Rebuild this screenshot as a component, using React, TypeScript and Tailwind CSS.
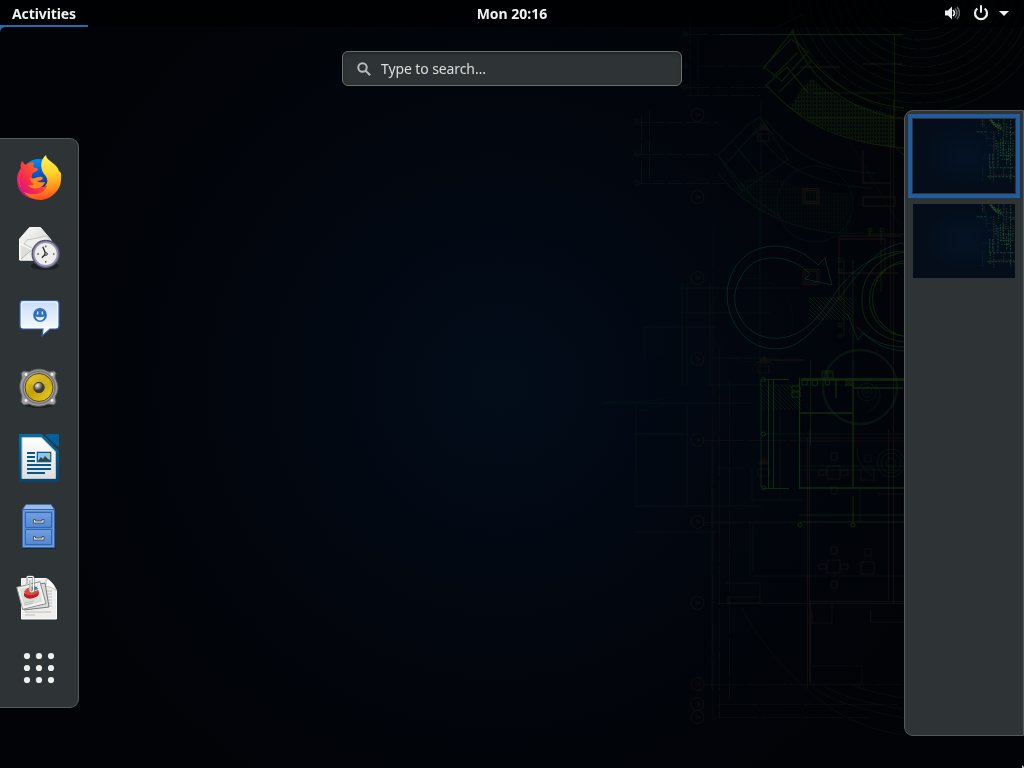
import type { ReactNode } from "react";

function Marker({ x, y, r = 6.5 }: { x: number; y: number; r?: number }) {
  return (
    <g>
      <circle cx={x} cy={y} r={r} />
      <path d={`M${x - 2} ${y - 1}h4v2h-3`} />
    </g>
  );
}

function Drawing() {
  const rows = [115, 197, 278, 359, 440, 522, 603, 684, 704, 717];
  const rings = Array.from({ length: 11 }, (_, i) => i);
  return (
    <g fill="none" strokeWidth="1">
      <g stroke="#2f211c" opacity="0.38">
        {rows.map((y) => (
          <Marker key={y} x={697.5} y={y} />
        ))}
        <path d="M704 440.5h94M704 522.5h94M704 684.5h198M718 704.5h180M718 717.5h150M713 230v490M719.5 350v368M729.5 380v320" strokeDasharray="40 3" opacity="0.6" />
        <path d="M809.5 430v252M807.5 438v250M810.5 600v85M890.5 110v220M893.5 100v505M888.5 430v170" />
        <path d="M800 438h104M800 441h104M718 603.5h186M728 597h32v6h-32zM725 583h35v14M812 601.5h92M870.5 610v12h34M812 612v11h20v-22" />
        <path d="M803 188.500h16v15h-16zM805 190.500h12v11h-12zM803 269.500h16v15h-16zM805 271.500h12v11h-12zM840 236h62M840 239h45v34M840 273h58M839 236v60M863 197h32v9h-32zM863 150v33h28M800 67h40M863 64h40M760 360h44" strokeWidth="1.3" />
        <path d="M742 608c20 40 61 82 86 98 20 14 44 24 75 29M811 687c28 18 60 24 92 31M825 687c27 14 55 18 78 22M850 684c20 8 35 11 53 14M812 666h50v18h-50" opacity=".7" />
        <path d="M759 130l5-7 5 7zM754 135l5-5M774 135l-5-5M759 363l5-7 5 7zM754 366l5-5M774 366l-5-5M759 464l5-6 5 6z" fill="#2b1b15" />
        <path d="M758 134h11v7h-11zM758 366h11v7h-11zM758 469h11v7h-11z" />
        {[472, 566].map((y) => (
          <path key={y} d={`M827 ${y - 6}h13v13h-13zM831 ${y - 19}h6v7h-6zM819 ${y - 2}h7v5h-7zM841 ${y - 2}h7v5h-7zM831 ${y + 15}h6v7h-6zM861 ${y - 4}h13v12h-13zM865 ${y - 17}h6v7h-6z`} />
        ))}
      </g>
      <g stroke="#11331f" opacity="0.25">
        <path d="M641.5 115v70M649.5 110v74M640 122.500h78M640 154.500h78M640 183.500h84M690 20v75M698 38v57M684 34.500h220M700 66h68M685 87.500h85M685 95.500h75" strokeDasharray="25 3 14 3" />
        <Marker x={685} y={34} r={2.5} /><Marker x={685} y={66} r={2.5} /><Marker x={685} y={87} r={2.5} /><Marker x={637} y={122} r={2.5} /><Marker x={637} y={154} r={2.5} /><Marker x={637} y={183} r={2.5} />
        <path d="M710 283v102h193M679 288h120M682 283v102M687 283v102M645 327h70M645 327v32M680 313h90M760 210v180M711 358h68M761 98v150" />
        <path d="M602 403h150M636 405v101h126M687 405v101M636 434h52M712 440v250M718 468h25M718 522h185M636 532h80" />
        <path d="M602 403c12-4 35 0 55-3l12-3M638 411c18-3 28-10 45-8" opacity=".6" />
        <path d="M752 468v32h48M752 500h51M750 522v54h154M753 523v50M804 520v56M780 390v110" />
        <circle cx="751" cy="320" r="42" opacity=".6" />
        <circle cx="815" cy="204" r="38" />
        <path d="M610 110c25 28 59 57 100 70M610 130c26 30 60 46 100 50" opacity=".5" />
        <path d="M718 173c27 36 80 64 146 60M718 155l35 43 29 20M718 155l30-30 12-8 28 42-28 20-18 12zM724 166l38-42M735 145l23 28M753 125c22 41 60 60 119 63M765 119c26 35 60 52 110 54" strokeWidth="1.3" />
      </g>
      <g stroke="#22430b" opacity="0.38">
        <path d="M763 69l30-39c7 35 38 64 65 76 15 7 30 11 46 13M766 85c39 43 80 58 138 63M764 67l27-28 17 13-26 29zM765 86l22-19 21 26M777 27l25-12M792 32c23 43 62 71 112 76M773 77l24-24M779 92l32-31M894.5 35v112" strokeWidth="1.3" />
        <g opacity=".65">
          {rings.map((i) => (
            <circle key={i} cx="920" cy="-20" r={42 + i * 9} strokeDasharray={i % 2 ? "9 1" : "100 2"} />
          ))}
        </g>
        <path d="M720 34.5h183M895 147l9 8M808 118h95M813 93h82" />
        <path d="M850 143l52 85" opacity=".4" />
      </g>
      <path d="M790 108L802 88 812 78C833 99 865 108 894 115V147C859 145 822 130 790 108Z" fill="url(#hatch)" stroke="none" opacity=".48" />
      <path d="M733 188L762 170C790 187 820 194 850 193V233C806 236 762 219 733 188Z" fill="url(#hatch)" stroke="none" opacity=".16" />
      <path d="M720 208h40v31h-40zM646 328h37v27h-37z" fill="url(#slant)" stroke="none" opacity=".07" />
      <path d="M809 297h43v23h-43z" fill="url(#slant)" stroke="none" opacity=".4" />
      <path d="M761 385h40v25h-40z" fill="url(#slant)" stroke="none" opacity=".25" />
      <g stroke="#115b38" opacity="0.38">
        <path d="M818 265C792 239 756 241 738 263C715 293 731 337 762 347C801 357 817 325 844 292C860 271 879 245 904 243M810 274C789 252 753 252 741 277C724 304 744 335 770 338C803 341 820 315 836 292C854 267 878 252 904 251M818 265l7-7 7 27-27-6 5-5M847 313l11 27 5-7c12 11 24 17 41 18M857 327c11 12 27 20 47 20" />
      </g>
      <g stroke="#245f0f" opacity="0.42">
        <path d="M911 260a38 38 0 1 0 0 77M906 263a33 33 0 1 0 0 73M913 252a48 48 0 0 0-51 51c0 19 14 35 42 39" strokeWidth="1.1" opacity=".8" />
        <path d="M763 379.500h26M768.500 380v108M773.500 380v108M763 488.500h26M761 380v107" />
        <circle cx="763.500" cy="379.500" r="2" /><circle cx="763.500" cy="434" r="2" /><circle cx="763.500" cy="488" r="2" />
        <path d="M799.500 378v110H904M801 379h103M801 380h103M853 378v110M800 413h53M800 488h104M836 378v20M853 388h50" strokeWidth="1.3" />
        <path d="M810.500 360v85M853 260v128M800 522h104M799 515h105" opacity=".65" />
        <path d="M822 371h5v7h-5zM828 371h5v7h-5zM823 373h3M829 373h3M792 386h8v5h-8zM792 392h8v5h-8zM802 379h5v6h-5zM846 379h6v6h-6zM845 379l8 7M853 379l-8 7M825 380h5l-1 5h-3z" />
        <circle cx="815" cy="383" r="3" /><circle cx="800" cy="525" r="2" /><circle cx="853" cy="525" r="2" /><path d="M853 496v27" />
        <path d="M867 234h37M870 229v8M881 229v16M844 260v76M881 250v42" opacity=".6" />
        <g opacity=".6">
          <circle cx="840" cy="260" r="2" /><circle cx="840" cy="271" r="2" /><circle cx="840" cy="298" r="2" /><circle cx="840" cy="325" r="2" /><circle cx="840" cy="336" r="2" /><circle cx="870" cy="230" r="2" /><circle cx="882" cy="230" r="2" />
        </g>
      </g>
      <g stroke="#194023" opacity=".27">
        <circle cx="860" cy="387" r="37" strokeWidth="2.500" />
        <circle cx="867" cy="392" r="5" /><circle cx="867" cy="392" r="9" /><circle cx="867" cy="392" r="2" />
        <circle cx="891" cy="463" r="5" /><circle cx="891" cy="463" r="10" /><circle cx="891" cy="463" r="14" />
        <path d="M875 385c12 11 0 23-8 28M857 448c0 15 7 21 15 28M860 487v34M878 494h26v30M800 466h104M801 470h100M763 434h140" />
      </g>
    </g>
  );
}

function ThumbDrawing() {
  return (
    <g fill="none" stroke="#2c6a3a" strokeWidth="9" opacity=".6">
      <path d="M773 33l55 50 70 46M802 75l88 20M790 50l60 55" stroke="#3e7a3a" strokeWidth="26" strokeDasharray="13 9" opacity=".75" />
      <path d="M696 30v80M912 27v180M980 35v620M905 210v175M876 390h148M770 375v128M800 378v122M853 260v250M765 515h259M748 605h276M640 155h100M940 350v150M960 165h60" strokeDasharray="24 12" />
      <path d="M780 35l58 75 60 29M785 35c35 70 60 85 110 80M860 35v160M940 70v160M880 230v170M910 235v180M890 430h85M1005 240v135M775 510v115M960 290v160M835 240v90M985 180h35M870 270h110M900 330h90" stroke="#43842c" strokeDasharray="12 14" />
      <path d="M714 50v60M810 148v520M910 520v70M805 590h210M935 110h80M925 250h60" stroke="#7a5640" opacity=".6" strokeDasharray="15 10" />
      <path d="M640 145l100 50M728 220h110M755 290h160M700 420h140M760 160h90M740 110v160M820 180v180M700 500v160" stroke="#1b4a50" strokeDasharray="8 15" />
    </g>
  );
}

function Wallpaper() {
  return (
    <svg viewBox="0 0 1024 768" className="absolute inset-0 h-full w-full" aria-hidden="true">
      <defs>
        <radialGradient id="night" gradientUnits="userSpaceOnUse" cx="500" cy="385" r="500">
          <stop offset="0" stopColor="#020d19" />
          <stop offset=".27" stopColor="#020914" />
          <stop offset=".6" stopColor="#02050c" />
          <stop offset="1" stopColor="#010306" />
        </radialGradient>
        <pattern id="hatch" width="3" height="4" patternUnits="userSpaceOnUse">
          <path d="M0 4L3 0M.5 0v4M0 1h3" stroke="#1b3510" strokeWidth=".65" />
        </pattern>
        <pattern id="slant" width="4" height="4" patternUnits="userSpaceOnUse">
          <path d="M-1 3l4 4M0 0l4 4M3-1l2 2" stroke="#1b5014" strokeWidth=".8" />
        </pattern>
      </defs>
      <path d="M0 0h1024v768H0z" fill="url(#night)" />
      <Drawing />
    </svg>
  );
}

function WorkspacePreview() {
  return (
    <svg viewBox="0 27 1024 741" preserveAspectRatio="none" className="block h-[74px] w-[102px]">
      <path d="M0 0h1024v768H0z" fill="#040d19" />
      <ellipse cx="520" cy="390" rx="460" ry="360" fill="url(#previewGlow)" />
      <defs>
        <radialGradient id="previewGlow"><stop stopColor="#041325" /><stop offset="1" stopColor="#040d19" /></radialGradient>
      </defs>
      <ThumbDrawing />
    </svg>
  );
}

function Icon({ children }: { children: ReactNode }) {
  return <svg viewBox="0 0 48 48" className="block h-12 w-12 overflow-visible">{children}</svg>;
}

function Firefox() {
  return (
    <Icon>
      <defs>
        <linearGradient id="foxRed" x1="5" y1="38" x2="38" y2="10" gradientUnits="userSpaceOnUse">
          <stop stopColor="#d51480" /><stop offset=".25" stopColor="#f52754" /><stop offset=".6" stopColor="#ff5b20" /><stop offset="1" stopColor="#ffad12" />
        </linearGradient>
        <linearGradient id="foxYellow" x1="30" y1="2" x2="36" y2="45" gradientUnits="userSpaceOnUse">
          <stop stopColor="#fff65b" /><stop offset=".45" stopColor="#ffd127" /><stop offset=".75" stopColor="#ff951e" /><stop offset="1" stopColor="#fd4c21" />
        </linearGradient>
        <linearGradient id="foxBlue" x1="21" y1="6" x2="26" y2="36" gradientUnits="userSpaceOnUse">
          <stop stopColor="#0090ee" /><stop offset=".45" stopColor="#075bd5" /><stop offset="1" stopColor="#29267d" />
        </linearGradient>
      </defs>
      <circle cx="24" cy="24" r="18" fill="url(#foxBlue)" />
      <path d="M7 8c1 2 2 3 4 4 2-2 5-3 8-2l-1 4c2 1 4 1 5 2 0 2-3 3-5 4-2 2-1 4-1 6 3 8 14 11 21 4l5-9c1 14-8 24-18 25C11 47 2 39 2 27c0-6 2-9 4-12-1-2 0-5 1-7z" fill="url(#foxRed)" />
      <path d="M31 2c0 6 11 8 13 16l2 2c1 11-2 16-5 19-5 6-11 8-16 8-6 0-12-3-16-8 12 5 20 1 23-6l-3 1c5-4 4-9 0-13-4-6-4-14 2-19z" fill="url(#foxYellow)" />
      <path d="M15 25c4 2 8-2 12-1 2 1 0 4-5 4 3 2 7 1 8 1-2 7-13 9-17 3 3 1 5 0 6-1-2-1-4-3-4-6z" fill="#ff8b1e" />
      <path d="M8 9c-1 2 0 4 2 6l4-2M7 17c-4 5-4 12-1 17" fill="none" stroke="#ff3660" strokeWidth="1" />
    </Icon>
  );
}

function Mail() {
  return (
    <Icon>
      <defs><linearGradient id="mailWhite" x2="1" y2="1"><stop stopColor="#fff" /><stop offset="1" stopColor="#c3c4bd" /></linearGradient></defs>
      <ellipse cx="30" cy="43" rx="14" ry="4" fill="#161a1b" opacity=".7" />
      <path d="M4.500 37V16L14.500 4.500h11L36 17v20z" fill="url(#mailWhite)" stroke="#f4f4f1" strokeWidth="1" />
      <path d="M9 21l3-4 20-4 4 7-17 6z" fill="#eeeeec" stroke="#c6c6c2" />
      <path d="M5 21l13 6L35 19v18H5z" fill="#dededb" stroke="#fff" />
      <path d="M6 36l12-10 11 10" fill="#eeeeeb" stroke="#b6b7b2" />
      <circle cx="30.700" cy="31" r="13.200" fill="#eeeeec" stroke="#565371" strokeWidth="2" />
      <circle cx="30.700" cy="31" r="11.900" fill="none" stroke="#9693b0" strokeWidth="1.800" />
      <path d="M30.700 22.500v1.700M30.700 38v1.500M22.200 31h1.700M38 31h1.500" stroke="#555" strokeWidth="1.400" />
      <path d="M27.800 23.800l2.900 7-3.800 4" fill="none" stroke="#242424" strokeWidth="1.300" />
      <circle cx="31" cy="31" r="1.300" fill="#fff" stroke="#222" strokeWidth="1" />
    </Icon>
  );
}

function Chat() {
  return (
    <Icon>
      <defs><linearGradient id="bubble" x2="0" y2="1"><stop stopColor="#c9dcf5" /><stop offset=".65" stopColor="#ecf5ff" /><stop offset="1" stopColor="#fff" /></linearGradient></defs>
      <path d="M8 7.500h33q3 0 3 3V33q0 3-3 3h-6l-8 7 1-7H8q-3 0-3-3V10.500q0-3 3-3z" fill="url(#bubble)" stroke="#2c60a5" strokeWidth="1.200" />
      <path d="M8 9h33l1.500 1.500V33L41 34.500H6.500v-24L8 9" fill="none" stroke="#fff" strokeWidth="1.200" opacity=".65" />
      <circle cx="25" cy="22" r="6.900" fill="#3471bd" /><path d="M22.700 18.500v3M27.300 18.500v3" stroke="#e6f2ff" strokeWidth="1.300" />
      <path d="M20.500 23.500q4.500 1.500 9 0-1.500 4-4.500 4t-4.500-4z" fill="#e6f2ff" />
    </Icon>
  );
}

function Speaker() {
  return (
    <Icon>
      <defs><linearGradient id="gold" x1="0" y1="0" x2="1" y2="1"><stop stopColor="#e6ca26" /><stop offset=".45" stopColor="#c2a006" /><stop offset="1" stopColor="#ead22e" /></linearGradient><radialGradient id="bolt" cx=".35" cy=".3"><stop stopColor="#eee" /><stop offset=".55" stopColor="#888a89" /><stop offset="1" stopColor="#393a3b" /></radialGradient></defs>
      <ellipse cx="24" cy="41" rx="16" ry="4" fill="#171b1c" opacity=".7" />
      <path d="M9 8l5 1c7-4 13-4 20 0l5-1 2 2-1 5c4 7 4 13 0 19l1 5-2 3-6-1c-6 3-13 3-19 0l-5 1-3-3 1-6c-3-7-3-12 0-18l-1-5z" fill="#9c9b9e" stroke="#555658" />
      <circle cx="24" cy="24.500" r="16" fill="#aaa9ad" stroke="#747277" strokeWidth="1.500" />
      <circle cx="24" cy="24.500" r="14" fill="url(#gold)" stroke="#56450b" strokeWidth="1" />
      <path d="M13 20C17 9 31 9 35 19l-11 5z" fill="#fff08a" opacity=".18" />
      <circle cx="24" cy="24.500" r="5.200" fill="url(#bolt)" stroke="#41391f" />
      {[[11, 11.5], [37, 11.5], [11, 37.5], [37, 37.5]].map(([x, y]) => <circle key={`${x}-${y}`} cx={x} cy={y} r="1.400" fill="#eee" />)}
    </Icon>
  );
}

function Writer() {
  return (
    <Icon>
      <defs><linearGradient id="writerBlue" x2="0" y2="1"><stop stopColor="#006eaa" /><stop offset="1" stopColor="#05466e" /></linearGradient><linearGradient id="writerPage" x2="0" y2="1"><stop stopColor="#fff" /><stop offset="1" stopColor="#dedede" /></linearGradient></defs>
      <path d="M5 1h22l17 17v30q0 1-1 1H5q-1 0-1-1V2q0-1 1-1z" fill="url(#writerBlue)" />
      <path d="M32 1h12v12q-1 1-2 0L31 3q-1-2 1-2z" fill="#00609b" />
      <path d="M7 4.500h19.300L40.500 18.700V45.500H7z" fill="url(#writerPage)" stroke="#bfc4c6" strokeWidth="1" />
      <path d="M12 20h8M12 24h8M12 28h8M12 32h24M12 36h24M12 40h18" stroke="#07588a" strokeWidth="2" />
      <path d="M22.300 19.300h13.400v9.400H22.300z" fill="#86c7f4" stroke="#07588a" strokeWidth="1.200" />
      <path d="M23 28l3-4 2 2 2-3 3 3 2 1v1z" fill="#3f433f" /><circle cx="33.500" cy="21.500" r="1.400" fill="#e8bd40" />
    </Icon>
  );
}

function Files() {
  return (
    <Icon>
      <defs><linearGradient id="drawer" x2="0" y2="1"><stop stopColor="#739fe0" /><stop offset="1" stopColor="#5486d1" /></linearGradient></defs>
      <path d="M7 44h34v2H7z" fill="#171c1e" opacity=".6" />
      <path d="M11 1.500h25l3.500 5H7.500z" fill="#9bbbe5" stroke="#3e70b7" />
      <path d="M7.500 6.500h32v38h-32z" fill="#5a8ad1" stroke="#3164b0" />
      <path d="M8.700 7.500h29.700v36H8.700z" fill="none" stroke="#78a2de" />
      {[9.5, 26.5].map((y) => <g key={y}><path d={`M10.500 ${y}h26v15h-26z`} fill="url(#drawer)" stroke="#3167b2" /><path d={`M18.500 ${y + 7}h2v1.500h6.500v-1.500h2v3.500h-10.500z`} fill="#eee" stroke="#414b55" strokeWidth=".9" /></g>)}
    </Icon>
  );
}

function Documents() {
  return (
    <Icon>
      <path d="M8 6h24q9 2 9.500 12v29H7z" fill="#111" opacity=".4" />
      <path d="M6.500 5.500H31q5 1 10.500 12v28.500h-35z" fill="#eeeeec" stroke="#fff" />
      <path d="M31 5.500q1 6-1 8 4-1 11.500 4Q38 8 31 5.500z" fill="#fff" stroke="#aaa" strokeWidth=".7" />
      <path d="M30 18h7M31 21h6M31 24h6M31 27h6M31 30h6M31 33h6M10 39h26M10 42h10" stroke="#aaa" strokeWidth=".7" />
      <path d="M5 15l25-5 4 24-25 3z" fill="#d9ddda" stroke="#777c77" />
      <path d="M1.700 14.300L25 8.700l6 22-23.300 5.600z" fill="#f2f3f1" stroke="#8a8f89" />
      <path d="M4.500 15.700l18.500-4 4.500 17-18.500 4.500z" fill="#dce0dd" />
      <path d="M9 20q6 3 14.500-2 1.500 4-2.500 6-8 4-12-1z" fill="#b52320" /><path d="M9 19q3-5 7-4l1 4 6.500-2q0 4-5.500 5-6 1-9-3z" fill="#e04841" /><path d="M17 14.500q4-2.500 6 1.500l-5.500 2z" fill="#4772b1" /><path d="M13.500 14l3-1 .5 4z" fill="#8bd13b" />
      <path d="M9 30l10-2M10 32l8-2" stroke="#aaa" strokeWidth=".7" />
      <path d="M12 12V5q0-1.500 1.500-1.500h3.500q1.500 0 1.500 1.500v12q0 2-1.700 2t-1.700-2V7" fill="none" stroke="#777" strokeWidth="2" />
      <path d="M12 12V5q0-1.500 1.500-1.500h3.500q1.500 0 1.500 1.500v12q0 2-1.700 2t-1.700-2V7" fill="none" stroke="#fff" strokeWidth="1.100" />
    </Icon>
  );
}

function AppGrid() {
  return <Icon>{[13, 25, 37].map((y) => [12, 24, 36].map((x) => <circle key={`${x}-${y}`} cx={x} cy={y} r="3.100" fill="#eeeeec" />))}</Icon>;
}

function TopBar() {
  return (
    <header className="grid h-[27px] grid-cols-[1fr_auto_1fr] bg-black/60 text-[14px] leading-[27px] font-bold text-[#f2f2f2]">
      <div className="h-[27px] w-[88px] border-b-2 border-[#256ab1] pl-3"><span className="tracking-[-0.1px]">Activities</span></div>
      <div>Mon 20:16</div>
      <div className="flex items-start justify-end pt-[5px] pr-[15px]">
        <svg width="16" height="16" viewBox="0 0 16 16"><path d="M1 5.500h3l4-4v13l-4-4H1z" fill="#eee" /><path d="M9 5q3 3 0 6" fill="none" stroke="#eee" strokeWidth="1.600" /><path d="M11 3.500q4 4.500 0 9M13 2q5 6 0 12" fill="none" stroke="#686a6b" strokeWidth="1.500" /></svg>
        <svg className="ml-[13px]" width="16" height="16" viewBox="0 0 16 16"><path d="M4.300 3.500a6 6 0 1 0 7.400 0" fill="none" stroke="#eee" strokeWidth="2.200" /><path d="M8 1v6" stroke="#eee" strokeWidth="2" strokeLinecap="round" /></svg>
        <svg className="mt-[6px] ml-[10px]" width="10" height="5" viewBox="0 0 10 5"><path d="M0 0h10L5 5z" fill="#eee" /></svg>
      </div>
    </header>
  );
}

export default function App() {
  return (
    <div className="relative h-[768px] w-[1024px] overflow-hidden bg-[#010306] font-['Noto_Sans',sans-serif]">
      <Wallpaper />
      <div className="relative flex h-full flex-col">
        <TopBar />
        <svg className="absolute top-[27px] left-0" width="6" height="6" viewBox="0 0 6 6"><path d="M0 0h6Q0 0 0 6z" fill="#256ab1" /></svg>
        <main className="flex flex-1 items-start justify-between">
          <nav className="mt-[111px] flex h-[570px] w-[79px] flex-col gap-[22px] rounded-r-[9px] border-y border-r border-[#55595b] bg-[#2e3436] pt-[14px] pl-[15px]">
            <Firefox /><Mail /><Chat /><Speaker /><Writer /><Files /><Documents /><AppGrid />
          </nav>
          <div className="mt-[24px] ml-[41px] flex h-[35px] w-[340px] items-center rounded-[6px] border border-[#6d7068] bg-[#2e3436] pl-[14px] text-[14px] text-[#dededb] shadow-[inset_0_2px_3px_rgba(0,0,0,0.3)]">
            <svg width="14" height="14" viewBox="0 0 14 14" fill="none" stroke="#b9bcba" strokeWidth="2"><circle cx="5.500" cy="5.500" r="4.200" /><path d="M8.700 8.700l4.500 4.500" /></svg>
            <span className="ml-[10px] tracking-[-0.1px]">Type to search…</span>
          </div>
          <aside className="mt-[83px] flex h-[626px] w-[120px] flex-col rounded-l-[9px] border border-[#55595b] bg-[#2e3436] pt-[3px] pl-[3px]">
            <div className="h-[84px] w-[112px] border-4 border-[#215d9c] p-px"><WorkspacePreview /></div>
            <div className="mt-[6px] ml-[5px]"><WorkspacePreview /></div>
          </aside>
        </main>
      </div>
      <svg className="absolute right-0 bottom-0" width="2" height="3" viewBox="0 0 2 3"><path d="M0 0v3h2V2z" fill="#ccc" /></svg>
    </div>
  );
}
